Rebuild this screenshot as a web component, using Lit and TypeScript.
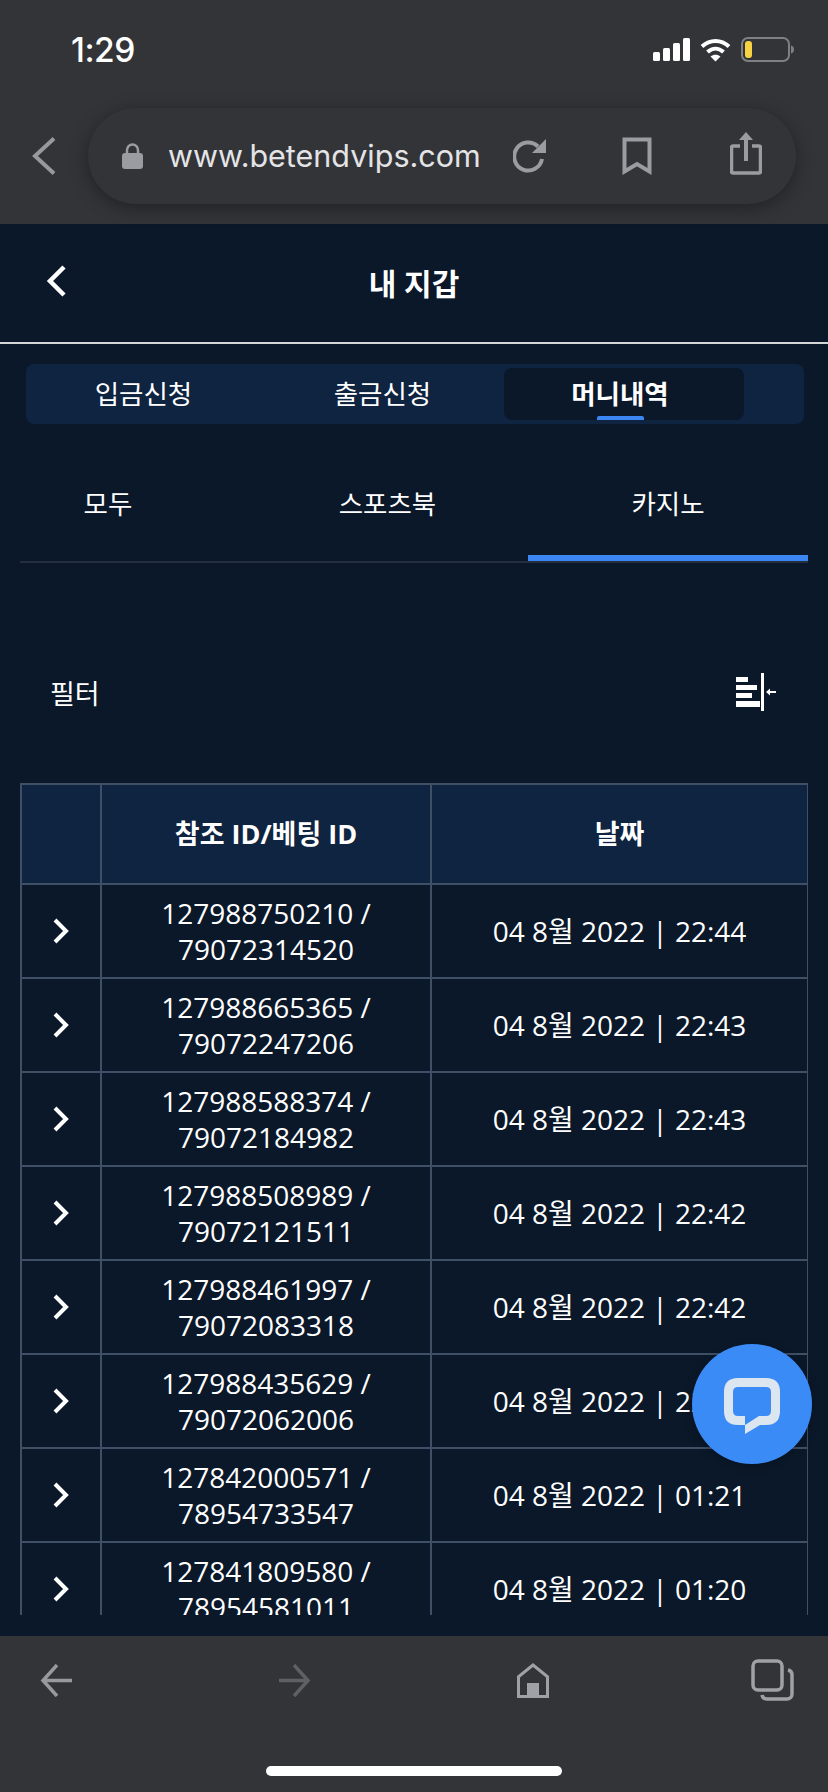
import { LitElement, html, css, svg } from "lit";
import { customElement } from "lit/decorators.js";

const ROWS = [
  ["127988750210", "79072314520", "22:44"],
  ["127988665365", "79072247206", "22:43"],
  ["127988588374", "79072184982", "22:43"],
  ["127988508989", "79072121511", "22:42"],
  ["127988461997", "79072083318", "22:42"],
  ["127988435629", "79072062006", "22:41"],
  ["127842000571", "78954733547", "01:21"],
  ["127841809580", "78954581011", "01:20"],
];

const chevronRight = svg`<path d="M2 2l11 11L2 24" fill="none" stroke="#fff" stroke-width="4" />`;

@customElement("app-root")
export class AppRoot extends LitElement {
  static override styles = css`
    :host {
      display: block;
      width: 828px;
      height: 1792px;
      overflow: hidden;
      position: relative;
      background: #0a1829;
      color: #fff;
      font-family: "Open Sans", "Noto Sans CJK KR", sans-serif;
    }
    svg {
      display: block;
      flex: none;
    }

    .chrome {
      height: 224px;
      box-sizing: border-box;
      background: #333438;
    }
    .status {
      height: 108px;
      box-sizing: border-box;
      padding: 30px 34px 0 71px;
      display: flex;
      justify-content: space-between;
      align-items: flex-start;
    }
    .time {
      font: 500 33.5px/40px Inter, sans-serif;
      letter-spacing: -0.5px;
    }
    .status-icons {
      display: flex;
      align-items: center;
      gap: 10px;
      padding-top: 7px;
    }
    .urlrow {
      display: flex;
      align-items: flex-start;
      padding-left: 32px;
    }
    .urlback {
      margin-top: 29px;
      margin-right: 32px;
    }
    .pill {
      width: 708px;
      height: 96px;
      box-sizing: border-box;
      border-radius: 48px;
      background: #333438;
      box-shadow: 0 4px 18px rgba(0, 0, 0, 0.35);
      display: flex;
      align-items: center;
      padding-left: 34px;
      color: #9b9ca2;
    }
    .url {
      font: 400 30.5px/40px Inter, sans-serif;
      color: #e4e4e7;
      margin-left: 25px;
      width: 345px;
      white-space: nowrap;
    }
    .pill .book {
      margin-left: 75px;
    }
    .pill .share {
      margin-left: 78px;
      margin-top: -7px;
    }

    .main {
      height: 1412px;
      box-sizing: border-box;
    }
    .title-bar {
      height: 120px;
      box-sizing: border-box;
      border-bottom: 2px solid #d5d6d8;
      display: flex;
      align-items: center;
      justify-content: center;
      position: relative;
      font-size: 30px;
      font-weight: 700;
      padding-bottom: 3px;
    }
    .title-bar svg {
      position: absolute;
      left: 46px;
      top: 41px;
    }
    .tabs {
      margin: 20px 24px 0 26px;
      height: 60px;
      box-sizing: border-box;
      padding: 4px 0 4px 0;
      border-radius: 8px;
      background: #0f2440;
      display: grid;
      grid-template-columns: 239px 239px 240px;
    }
    .tab {
      display: flex;
      align-items: center;
      justify-content: center;
      font-size: 26.5px;
      border-radius: 8px;
      position: relative;
      padding: 0 4px 4px 0;
    }
    .tab.on {
      background: #0a1829;
      font-weight: 700;
      padding-right: 8px;
    }
    .tab.on::after {
      content: "";
      position: absolute;
      left: 93px;
      bottom: 0;
      width: 47px;
      height: 4px;
      border-radius: 2px 2px 0 0;
      background: #3b86f2;
    }
    .subtabs {
      margin: 0 20px;
      height: 139px;
      box-sizing: border-box;
      display: grid;
      grid-template-columns: 227px 281px 280px;
      border-bottom: 2px solid #232f3e;
    }
    .subtab {
      display: flex;
      align-items: center;
      justify-content: center;
      font-size: 26.5px;
      padding-top: 20px;
    }
    .subtab:first-child {
      padding-right: 51px;
    }
    .subtab.on {
      border-bottom: 6px solid #3b86f2;
      padding-top: 26px;
    }
    .filter {
      height: 220px;
      box-sizing: border-box;
      padding: 38px 52px 0 50px;
      display: flex;
      align-items: center;
      justify-content: space-between;
      font-size: 27px;
    }
    .table-clip {
      margin-left: 20px;
      width: 788px;
      height: 832px;
      overflow: hidden;
    }
    table {
      border-collapse: collapse;
      table-layout: fixed;
      width: 787px;
      font-size: 28px;
      line-height: 36.5px;
      text-align: center;
    }
    th,
    td {
      border: 2px solid #3f5066;
      padding: 0;
    }
    th {
      height: 98px;
      background: #0f2440;
      font-size: 27px;
      font-weight: 700;
    }
    td {
      height: 92px;
    }
    td svg {
      margin: 0 auto;
    }

    .bottom {
      height: 156px;
      position: relative;
      background: #333438;
      display: flex;
      align-items: flex-start;
      padding: 23px 34px 0 40px;
      box-sizing: border-box;
    }
    .bottom .fwd {
      margin-left: 207px;
      margin-top: 5px;
    }
    .bottom .back {
      margin-top: 5px;
    }
    .bottom .home {
      margin-left: 206px;
      margin-top: 4px;
    }
    .bottom .copies {
      margin-left: 202px;
    }
    .indicator {
      position: absolute;
      left: 266px;
      top: 130px;
      width: 296px;
      height: 10px;
      border-radius: 5px;
      background: #fff;
    }
    .chat {
      position: absolute;
      left: 692px;
      top: 1344px;
      width: 120px;
      height: 120px;
      border-radius: 50%;
      background: #3b8bf7;
      box-shadow: 0 2px 10px rgba(0, 0, 0, 0.25);
    }
  `;

  private _statusIcons() {
    return html`<div class="status-icons">
      <svg width="37" height="23" viewBox="0 0 37 23" fill="#fff">
        <rect x="0" y="14" width="7" height="9" rx="1.5" />
        <rect x="10" y="10" width="7" height="13" rx="1.5" />
        <rect x="20" y="5" width="7" height="18" rx="1.5" />
        <rect x="30" y="0" width="7" height="23" rx="1.5" />
      </svg>
      <svg width="31" height="24" viewBox="0 0 31 24" fill="none" stroke="#fff" stroke-width="4">
        <path d="M2 8.5c8-7.500 19-7.500 27 0" />
        <path d="M7.500 14c5-4.500 11-4.500 16 0" />
        <path d="M15.500 23.500l-5-5c3-2.500 7-2.500 10 0z" fill="#fff" stroke="none" />
      </svg>
      <svg width="53" height="25" viewBox="0 0 53 25">
        <rect x="1" y="1" width="47" height="23" rx="6" fill="none" stroke="#7f8085" stroke-width="2" />
        <rect x="4" y="4" width="7" height="17" rx="3" fill="#f7d344" />
        <path d="M50 8.500c2 .5 3 2 3 4s-1 3.500-3 4z" fill="#7f8085" />
      </svg>
    </div>`;
  }

  private _urlBar() {
    return html`<div class="urlrow">
      <svg class="urlback" width="24" height="38" viewBox="0 0 24 38" fill="none" stroke="#98999e" stroke-width="4">
        <path d="M22 1.500L3 19l19 17.500" />
      </svg>
      <div class="pill">
        <svg width="21" height="26" viewBox="0 0 21 26" fill="#9b9ca2">
          <path d="M5 11V7a5.500 5.500 0 0111 0v4" fill="none" stroke="#9b9ca2" stroke-width="2.500" />
          <rect x="0" y="10" width="21" height="16" rx="3" />
        </svg>
        <div class="url">www.betendvips.com</div>
        <svg width="34" height="34" viewBox="0 0 34 34" fill="none" stroke="#9b9ca2" stroke-width="4">
          <path d="M25 7.500A14 14 0 1029 20" />
          <path d="M19 14L33 0v14z" fill="#9b9ca2" stroke="none" />
        </svg>
        <svg class="book" width="30" height="38" viewBox="0 0 30 38" fill="none" stroke="#9b9ca2" stroke-width="4">
          <path d="M2.500 2.500h25v32L15 27 2.500 34.500z" />
        </svg>
        <svg class="share" width="32" height="44" viewBox="0 0 32 44" fill="none" stroke="#9b9ca2" stroke-width="3.500">
          <path d="M10 15H3a1.500 1.500 0 00-1.500 1.500v24A1.500 1.500 0 003 42h26a1.500 1.500 0 001.500-1.500v-24A1.500 1.500 0 0029 15h-7" />
          <path d="M16 5v25" stroke-width="4" />
          <path d="M9 9l7-8 7 8z" fill="#9b9ca2" stroke="none" />
        </svg>
      </div>
    </div>`;
  }

  private _filterIcon() {
    return html`<svg width="40" height="38" viewBox="0 0 40 38" fill="#fff">
      <rect x="0" y="4" width="12" height="5" />
      <rect x="0" y="12" width="21" height="5" />
      <rect x="0" y="20" width="16" height="5" />
      <rect x="0" y="28" width="24" height="6" />
      <rect x="25" y="0" width="3" height="38" />
      <path d="M30 19l4-3.500V18h6v2h-6v2.500z" />
    </svg>`;
  }

  override render() {
    return html`
      <div class="chrome">
        <div class="status">
          <div class="time">1:29</div>
          ${this._statusIcons()}
        </div>
        ${this._urlBar()}
      </div>

      <div class="main">
        <div class="title-bar">
          <svg width="20" height="32" viewBox="0 0 20 32" fill="none" stroke="#fff" stroke-width="4.500">
            <path d="M18 2L4 16l14 14" />
          </svg>
          내 지갑
        </div>
        <div class="tabs">
          <div class="tab">입금신청</div>
          <div class="tab">출금신청</div>
          <div class="tab on">머니내역</div>
        </div>
        <div class="subtabs">
          <div class="subtab">모두</div>
          <div class="subtab">스포츠북</div>
          <div class="subtab on">카지노</div>
        </div>
        <div class="filter">
          <span>필터</span>
          ${this._filterIcon()}
        </div>
        <div class="table-clip">
          <table>
            <colgroup>
              <col style="width:80px" />
              <col style="width:330px" />
              <col style="width:377px" />
            </colgroup>
            <thead>
              <tr>
                <th></th>
                <th>참조 ID/베팅 ID</th>
                <th>날짜</th>
              </tr>
            </thead>
            <tbody>
              ${ROWS.map(
                ([ref, bet, time]) => html`<tr>
                  <td><svg width="16" height="26" viewBox="0 0 16 26">${chevronRight}</svg></td>
                  <td>${ref} /<br />${bet}</td>
                  <td>04 8월 2022 | ${time}</td>
                </tr>`,
              )}
            </tbody>
          </table>
        </div>
      </div>

      <div class="bottom">
        <svg class="back" width="32" height="33" viewBox="0 0 32 33" fill="none" stroke="#98999e" stroke-width="3.500">
          <path d="M32 16.500H3M17 1L3 16.500 17 32" />
        </svg>
        <svg class="fwd" width="32" height="33" viewBox="0 0 32 33" fill="none" stroke="#5f6064" stroke-width="3.500">
          <path d="M0 16.500h29M15 1l14 15.500L15 32" />
        </svg>
        <svg class="home" width="32" height="35" viewBox="0 0 32 35" fill="#a0a1a7">
          <path d="M16 0L32 13v22H0V13zM3 14.500V32h7V20h12v12h7V14.500L16 4z" fill-rule="evenodd" />
        </svg>
        <svg class="copies" width="43" height="42" viewBox="0 0 43 42" fill="none" stroke="#a0a1a7" stroke-width="3.500">
          <rect x="2" y="2" width="29" height="29" rx="5" />
          <path d="M37 11a5 5 0 014 5v19a5 5 0 01-5 5H16a5 5 0 01-5-4" />
        </svg>
        <div class="indicator"></div>
      </div>

      <div class="chat">
        <svg width="120" height="120" viewBox="0 0 120 120">
          <path
            fill="#dce6f0"
            fill-rule="evenodd"
            d="M46 34H74Q88 34 88 48V67Q88 81 74 81H68L53 90V81H46Q32 81 32 67V48Q32 34 46 34ZM46 43Q41 43 41 48V67Q41 72 46 72H53V81L67 72H74Q79 72 79 67V48Q79 43 74 43Z"
          />
        </svg>
      </div>
    `;
  }
}
